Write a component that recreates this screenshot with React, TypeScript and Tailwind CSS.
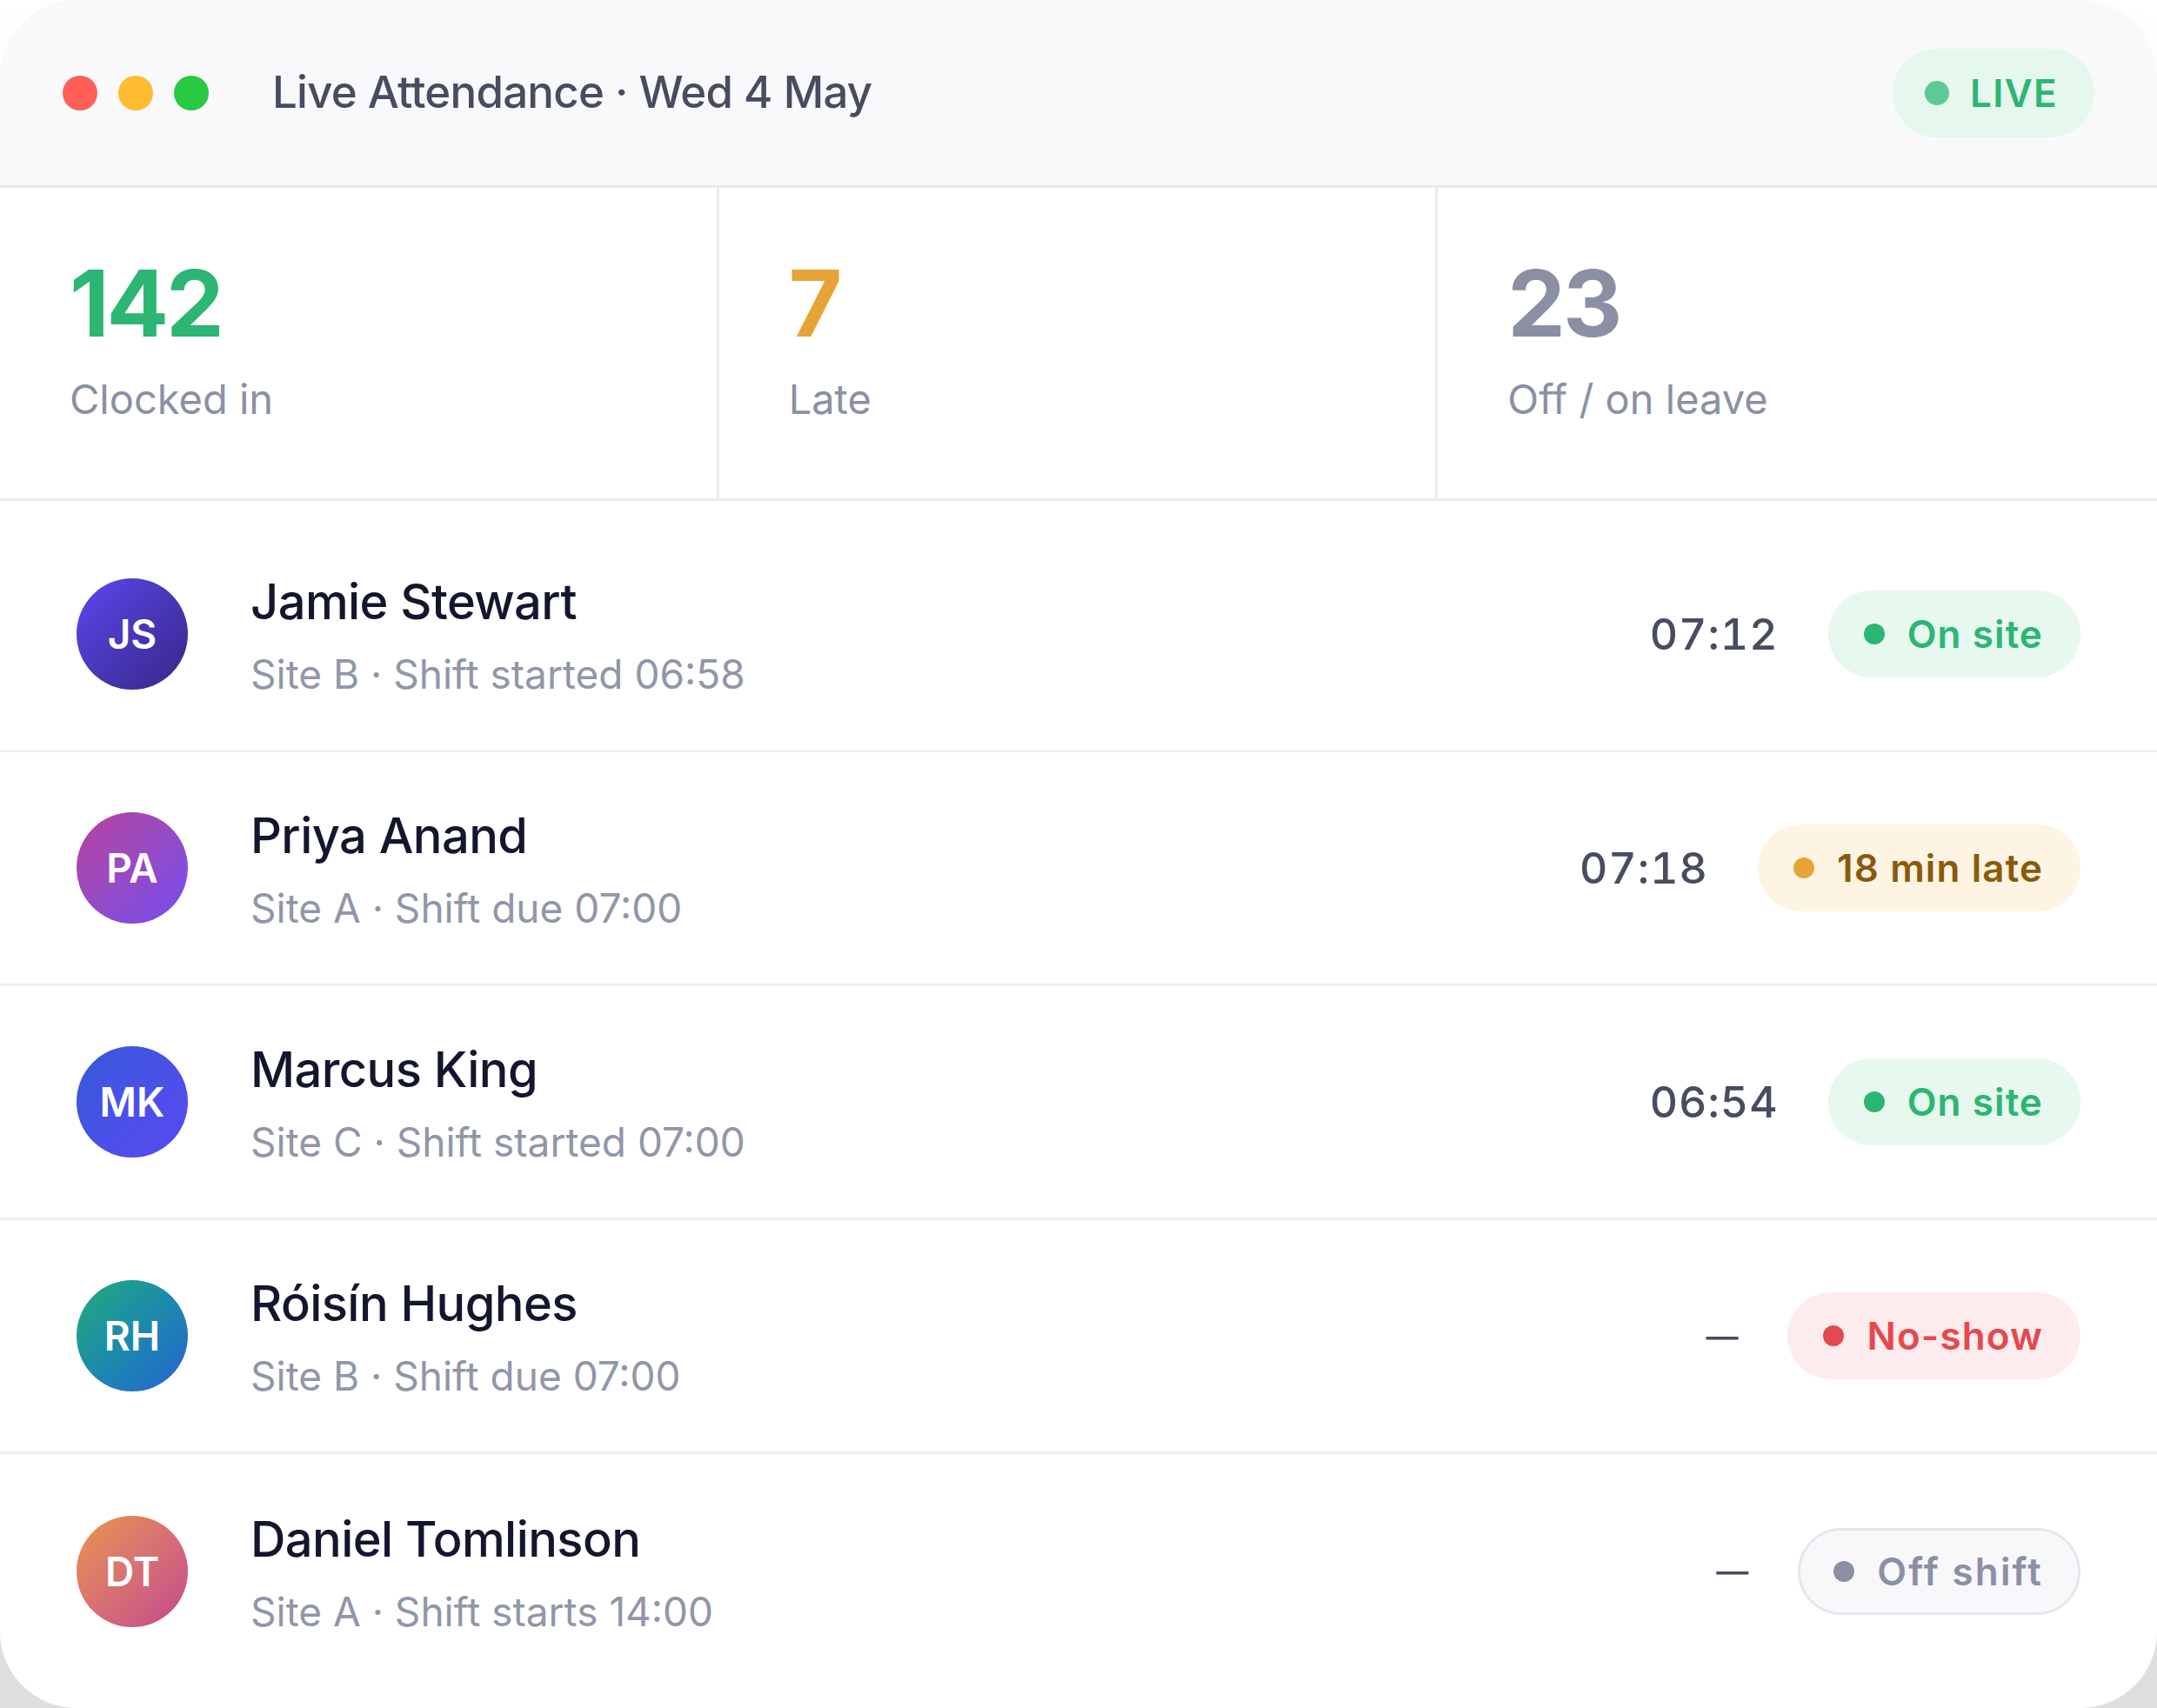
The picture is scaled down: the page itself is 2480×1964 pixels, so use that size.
import React from "react";

type Status = "onsite" | "late" | "noshow" | "off";

type Person = {
    initials: string;
    name: string;
    detail: string;
    time: string;
    status: Status;
    label: string;
    avatar: string;
};

const people: Person[] = [
    { initials: "JS", name: "Jamie Stewart", detail: "Site B · Shift started 06:58", time: "07:12", status: "onsite", label: "On site", avatar: "bg-gradient-to-br from-[#5b47ee] to-[#372887]" },
    { initials: "PA", name: "Priya Anand", detail: "Site A · Shift due 07:00", time: "07:18", status: "late", label: "18 min late", avatar: "bg-gradient-to-br from-[#b73f9a] to-[#7449f0]" },
    { initials: "MK", name: "Marcus King", detail: "Site C · Shift started 07:00", time: "06:54", status: "onsite", label: "On site", avatar: "bg-gradient-to-br from-[#3359da] to-[#5a47f3]" },
    { initials: "RH", name: "Róisín Hughes", detail: "Site B · Shift due 07:00", time: "—", status: "noshow", label: "No-show", avatar: "bg-gradient-to-br from-[#28aa78] to-[#2b5fd3]" },
    { initials: "DT", name: "Daniel Tomlinson", detail: "Site A · Shift starts 14:00", time: "—", status: "off", label: "Off shift", avatar: "bg-gradient-to-br from-[#ea9446] to-[#c4468d]" },
];

const badgeStyles: Record<Status, { box: string; dot: string; text: string }> = {
    onsite: { box: "bg-[#e7f8ef] border-transparent", dot: "bg-[#2bb673]", text: "text-[#2bb673]" },
    late: { box: "bg-[#fdf4e3] border-transparent", dot: "bg-[#e6a436]", text: "text-[#8a5a0c]" },
    noshow: { box: "bg-[#fdecee] border-transparent", dot: "bg-[#e5484d]", text: "text-[#e5484d]" },
    off: { box: "bg-[#f8f8fb] border-[#e6e6ee]", dot: "bg-[#8b90a4]", text: "text-[#8b90a4]" },
};

function Badge({ status, label }: { status: Status; label: string }) {
    const s = badgeStyles[status];
    return (
        <div className={`flex items-center gap-[26px] h-[100px] pl-[38px] pr-[40px] rounded-full border-[3px] ${s.box}`}>
            <span className={`w-[24px] h-[24px] rounded-full ${s.dot}`}></span>
            <span className={`text-[44px] font-semibold leading-none ${status === "off" ? "tracking-[0.05em]" : "tracking-[0.025em]"} ${s.text}`}>{label}</span>
        </div>
    );
}

function Stat({ value, label, color, last }: { value: string; label: string; color: string; last?: boolean }) {
    return (
        <div className={`flex flex-col justify-center pl-[80px] pb-[12px] ${last ? "" : "border-r-[3px] border-[#e9e9ef]"}`}>
            <div className={`text-[106px] font-bold leading-none tracking-[-0.03em] ${color}`}>{value}</div>
            <div className="mt-[33px] text-[47px] leading-none text-[#8b90a4]">{label}</div>
        </div>
    );
}

export default function App() {
    return (
        <div className="w-full h-[1964px] bg-gradient-to-b from-white to-[#dedede]" style={{ fontFamily: "Inter, 'Noto Sans', sans-serif" }}>
            <div className="w-full h-full bg-white rounded-[88px] overflow-hidden flex flex-col">
                {/* header */}
                <div className="h-[216px] shrink-0 flex items-center px-[72px] bg-[#f9f9fb] border-b-[3px] border-[#e9e9ef]">
                    <div className="flex items-center gap-[24px]">
                        <span className="w-[40px] h-[40px] rounded-full bg-[#ff5f57]"></span>
                        <span className="w-[40px] h-[40px] rounded-full bg-[#febc2e]"></span>
                        <span className="w-[40px] h-[40px] rounded-full bg-[#28c840]"></span>
                    </div>
                    <div className="ml-[73px] text-[51px] font-medium text-[#474c61] tracking-[-0.015em]">Live Attendance · Wed 4 May</div>
                    <div className="ml-auto flex items-center gap-[24px] h-[102px] pl-[37px] pr-[42px] rounded-full bg-[#e6f7ee]">
                        <span className="w-[28px] h-[28px] rounded-full bg-[#5ec995]"></span>
                        <span className="text-[44px] font-semibold tracking-[0.03em] leading-none text-[#2bb673]">LIVE</span>
                    </div>
                </div>

                {/* stats */}
                <div className="h-[360px] shrink-0 grid grid-cols-3 border-b-[3px] border-[#e9e9ef]">
                    <Stat value="142" label="Clocked in" color="text-[#2bb673]" />
                    <Stat value="7" label="Late" color="text-[#e6a436]" />
                    <Stat value="23" label="Off / on leave" color="text-[#8b8fa3]" last />
                </div>

                {/* list */}
                <div className="pt-[20px]">
                    {people.map((p, i) => (
                        <div key={p.initials} className={`h-[269px] flex items-center px-[88px] ${i < people.length - 1 ? "border-b-[3px] border-[#efeff3]" : ""}`}>
                            <div className={`w-[128px] h-[128px] rounded-full flex items-center justify-center shrink-0 ${p.avatar}`}>
                                <span className="text-[46px] font-semibold text-white leading-none">{p.initials}</span>
                            </div>
                            <div className="ml-[72px] flex flex-col pt-[4px]">
                                <div className="text-[56px] font-medium leading-none text-[#14162e] tracking-[-0.01em]">{p.name}</div>
                                <div className="mt-[32px] text-[46px] leading-none text-[#9196a9]">{p.detail}</div>
                            </div>
                            <div className="ml-auto flex items-center gap-[57px]">
                                {p.time === "—" ? (
                                    <div className="text-[37px] font-medium leading-none text-[#474c61]">{p.time}</div>
                                ) : (
                                    <div className="text-[50px] font-medium leading-none text-[#474c61] tracking-[0.02em] tabular-nums">{p.time}</div>
                                )}
                                <Badge status={p.status} label={p.label} />
                            </div>
                        </div>
                    ))}
                </div>
            </div>
        </div>
    );
}
